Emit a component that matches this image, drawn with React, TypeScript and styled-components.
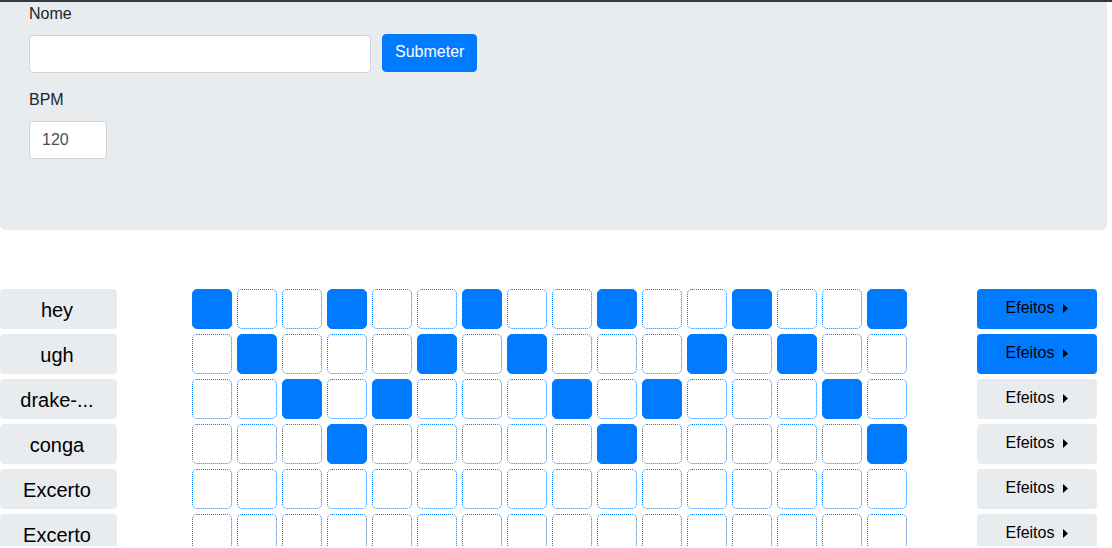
import React from "react";
import styled, { createGlobalStyle } from "styled-components";

const Global = createGlobalStyle`
  html, body { margin: 0; padding: 0; background: #fff; overflow: hidden; }
  body { font-family: "Liberation Sans", Arial, sans-serif; color: #212529; }
  * { box-sizing: border-box; }
`;

const Page = styled.div`
  border-top: 2px solid #343a40;
  width: 1112px;
  height: 546px;
  overflow: hidden;
`;

const Jumbotron = styled.div`
  width: 1107px;
  height: 228px;
  background: #e9ecef;
  border-radius: 0 0 5px 5px;
  padding: 0 29px;
`;

const Label = styled.label`
  display: block;
  font-size: 16px;
  line-height: 24px;
  margin-bottom: 9px;
`;

const FormRow = styled.div`
  display: flex;
  align-items: flex-start;
  gap: 11px;
  margin-bottom: 15px;
`;

const Input = styled.input<{ $w: number }>`
  display: block;
  width: ${(p) => p.$w}px;
  height: 38px;
  border: 1px solid #ced4da;
  border-radius: 4px;
  background: #fff;
  font-family: inherit;
  font-size: 16px;
  color: #495057;
  padding: 0 12px;
  margin: 0;
  outline: none;
`;

const PrimaryButton = styled.button`
  height: 38px;
  margin-top: -1px;
  padding: 0 12px 2px;
  background: #007bff;
  color: #fff;
  border: 1px solid #007bff;
  border-radius: 4px;
  font-family: inherit;
  font-size: 16px;
`;

const Sequencer = styled.div`
  margin-top: 59px;
  display: flex;
  flex-direction: column;
  gap: 5px;
`;

const TrackRow = styled.div`
  display: flex;
  align-items: center;
  height: 40px;
`;

const TrackName = styled.button`
  width: 117px;
  height: 40px;
  border: none;
  border-radius: 4px;
  background: #e9ecef;
  color: #000;
  font-family: inherit;
  font-size: 20px;
  padding: 2px 3px 0 0;
  margin-right: 75px;
`;

const Steps = styled.div`
  display: flex;
  gap: 5px;
  margin-right: 70px;
`;

const Step = styled.div<{ $on: boolean }>`
  width: 40px;
  height: 40px;
  border-radius: 5px;
  border: 1px ${(p) => (p.$on ? "solid" : "dotted")} #007bff;
  background: ${(p) => (p.$on ? "#007bff" : "#fff")};
`;

const FxButton = styled.button<{ $active: boolean }>`
  width: 120px;
  height: 40px;
  border: none;
  border-radius: 4px;
  background: ${(p) => (p.$active ? "#007bff" : "#e9ecef")};
  color: #000;
  font-family: inherit;
  font-size: 16px;
  display: flex;
  align-items: center;
  justify-content: center;
  gap: 9px;
  padding: 0 0 3px 0;
`;

const Caret = () => (
  <svg width="5" height="9" viewBox="0 0 5 9" style={{ marginTop: 2 }}>
    <path d="M0 0 L5 4.5 L0 9 Z" fill="#000" />
  </svg>
);

const tracks = [
  { name: "hey", on: [0, 3, 6, 9, 12, 15], fx: true },
  { name: "ugh", on: [1, 5, 7, 11, 13], fx: true },
  { name: "drake-...", on: [2, 4, 8, 10, 14], fx: false },
  { name: "conga", on: [3, 9, 15], fx: false },
  { name: "Excerto", on: [], fx: false },
  { name: "Excerto", on: [], fx: false },
];

export default function App() {
  return (
    <Page>
      <Global />
      <Jumbotron>
        <Label>Nome</Label>
        <FormRow>
          <Input $w={342} type="text" />
          <PrimaryButton>Submeter</PrimaryButton>
        </FormRow>
        <Label>BPM</Label>
        <Input $w={78} type="text" defaultValue="120" />
      </Jumbotron>
      <Sequencer>
        {tracks.map((t, i) => (
          <TrackRow key={i}>
            <TrackName>{t.name}</TrackName>
            <Steps>
              {Array.from({ length: 16 }, (_, s) => (
                <Step key={s} $on={t.on.includes(s)} />
              ))}
            </Steps>
            <FxButton $active={t.fx}>
              Efeitos <Caret />
            </FxButton>
          </TrackRow>
        ))}
      </Sequencer>
    </Page>
  );
}
